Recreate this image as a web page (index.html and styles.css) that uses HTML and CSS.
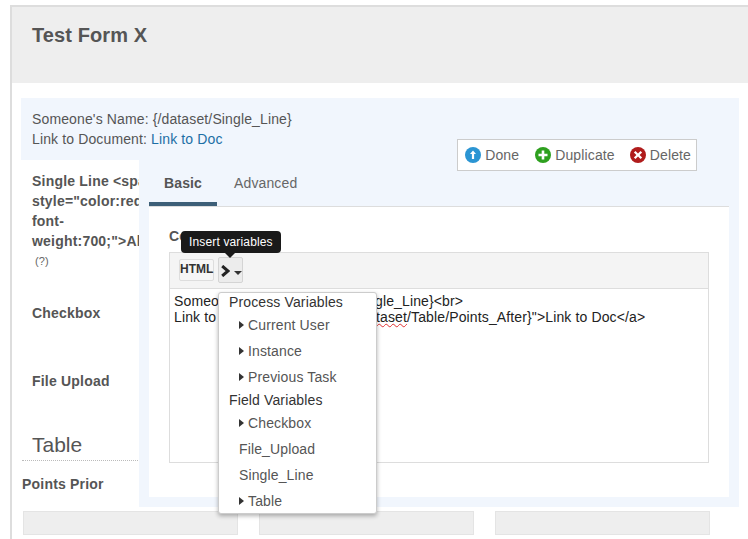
FILE: index.html
```html
<!DOCTYPE html>
<html lang="en">
<head>
<meta charset="utf-8">
<title>Test Form X</title>
<link rel="stylesheet" href="styles.css">
</head>
<body>
<div class="frame">
  <header class="head"><h1>Test Form X</h1></header>
  <main class="main">
    <section class="intro">
      <div>Someone's Name: {/dataset/Single_Line}</div>
      <div>Link to Document: <a href="#">Link to Doc</a></div>
    </section>
    <section class="fields">
      <div class="field-single"><b>Single Line &lt;span style="color:red; font-weight:700;"&gt;All</b><span class="help">(?)</span></div>
      <div class="field-check"><b>Checkbox</b></div>
      <div class="field-file"><b>File Upload</b></div>
      <h2>Table</h2>
      <div class="cols-label"><b>Points Prior</b></div>
      <div class="inputs"><div class="fake"></div><div class="fake"></div><div class="fake"></div></div>
    </section>

    <section class="editor">
      <div class="actions">
        <span class="act"><svg width="16" height="16" viewBox="0 0 16 16"><circle cx="8" cy="8" r="8" fill="#2b95d3"/><path d="M8 3.500 11 7H9.100V12H6.900V7H5Z" fill="#fff"/></svg>Done</span>
        <span class="act"><svg width="16" height="16" viewBox="0 0 16 16"><circle cx="8" cy="8" r="8" fill="#2ea01f"/><path d="M6.700 3.500h2.600v3.200h3.200v2.600H9.300v3.200H6.700V9.300H3.500V6.700H6.700Z" fill="#fff"/></svg>Duplicate</span>
        <span class="act"><svg width="16" height="16" viewBox="0 0 16 16"><circle cx="8" cy="8" r="8" fill="#b01c1c"/><path d="M5.500 3.900 8 6.400 10.500 3.900 12.100 5.500 9.600 8 12.100 10.500 10.500 12.100 8 9.600 5.500 12.100 3.900 10.500 6.400 8 3.900 5.500Z" fill="#fff"/></svg>Delete</span>
      </div>
      <nav class="tabs"><span class="tab on">Basic</span><span class="tab">Advanced</span></nav>
      <div class="pane">
        <div class="content-label">Content</div>
        <div class="wys">
          <div class="bar">
            <span class="btn-html">HTML</span>
            <span class="btn-var"><svg width="9" height="12" viewBox="0 0 9 12"><path d="M1.200 1 7 6 1.200 11" fill="none" stroke="#222" stroke-width="3"/></svg><i class="caret"></i></span>
          </div>
          <div class="code">Someone's Name: {/dataset/Single_Line}&lt;br&gt;<br>Link to Document: &lt;a href="{/<span class="spell">dataset</span>/Table/Points_After}"&gt;Link to Doc&lt;/a&gt;</div>
        </div>
      </div>
      <div class="tip">Insert variables</div>
      <ul class="menu">
        <li class="group">Process Variables</li>
        <li class="item sub">Current User</li>
        <li class="item sub">Instance</li>
        <li class="item sub">Previous Task</li>
        <li class="group">Field Variables</li>
        <li class="item sub">Checkbox</li>
        <li class="item">File_Upload</li>
        <li class="item">Single_Line</li>
        <li class="item sub">Table</li>
      </ul>
    </section>
  </main>
</div>
</body>
</html>
```
FILE: styles.css
```css
html, body { margin: 0; padding: 0; background: #fff; }
body {
  height: 539px;
  overflow: hidden;
  font: 14px/20px "Liberation Sans", Arial, sans-serif;
  letter-spacing: .13px;
  color: #555;
}
.frame {
  margin: 5px 0 0 10px;
  border-left: 2px solid #ddd;
  border-top: 2px solid #ddd;
  height: 532px;
}
.head { height: 76px; background: #eee; box-sizing: border-box; padding: 17px 20px 0; }
.head h1 { margin: 0; font-size: 20px; line-height: 22px; font-weight: 700; color: #555; letter-spacing: .1px; }
.main { position: relative; padding: 15px 9px 0; }
.intro { background: #f1f6fd; height: 62px; padding: 11px 11px 0; box-sizing: border-box; }
.intro a { color: #1d6fa5; text-decoration: none; }
.fields { padding: 11px 0 0 11px; width: 108px; }
.fields b { font-weight: 700; color: #555; letter-spacing: .2px; }
.field-single { height: 132px; width: 130px; }
.help { display: block; font-size: 11px; line-height: 14px; padding-left: 3px; margin-top: 3px; color: #666; }
.field-check { height: 68px; }
.field-file { height: 63px; }
.fields h2 { margin: 0; font-size: 21px; font-weight: 400; line-height: 22px; height: 26px; color: #555; letter-spacing: 0; }
.cols-label { margin-left: -10px; width: 130px; padding-top: 13px; border-top: 1px dotted #bbb; }
.inputs { display: flex; gap: 21px; margin: 17px 0 0 -9px; width: 687px; }
.fake { width: 215px; height: 24px; flex: none; background: #eee; border: 1px solid #e4e4e4; box-sizing: border-box; }

.editor {
  position: absolute;
  left: 127px; top: 77px;
  width: 600px; height: 347px;
  background: #f1f6fd;
  box-sizing: border-box;
  padding: 0 10px;
}
.actions {
  position: absolute; right: 42px; top: -21px;
  display: flex; gap: 15px; align-items: center;
  height: 32px; box-sizing: border-box;
  background: #fff; border: 1px solid #ccc;
  padding: 0 5px 0 7px;
}
.act { display: flex; align-items: center; gap: 4px; color: #666; }
.act:first-child { margin-right: 1px; }
.tabs { display: flex; height: 46px; border-bottom: 1px solid #ddd; }
.tab { padding: 13px 17px 0; color: #666; }
.tab.on { font-weight: 700; color: #555; width: 68px; box-sizing: border-box; padding: 13px 0 0 15px; border-bottom: 4px solid #3d5f78; }
.pane { background: #fff; height: 290px; box-sizing: border-box; padding: 22px 20px 0; }
.content-label { font-weight: 700; line-height: 14px; height: 23px; }
.wys { border: 1px solid #ddd; height: 211px; box-sizing: border-box; }
.bar { background: #f4f4f4; border-bottom: 1px solid #ddd; display: flex; gap: 4px; padding: 6px 0 0 9px; box-sizing: border-box; height: 36px; }
.btn-html { width: 35px; height: 22px; text-align: center; box-sizing: border-box; border: 1px solid #ddd; border-radius: 2px; background: #f6f6f6; font-size: 12px; line-height: 19px; font-weight: 700; color: #333; letter-spacing: 0; }
.btn-var { width: 25px; height: 26px; box-sizing: border-box; border: 1px solid #d4d4d4; border-radius: 2px; background: #ececec; display: flex; align-items: center; gap: 4px; padding: 2px 0 0 2px; margin-top: -2px; }
.caret { width: 0; height: 0; margin-top: 3px; border: 4px solid transparent; border-top-color: #333; border-bottom-width: 0; }
.code { padding: 4px; color: #222; line-height: 16px; white-space: nowrap; }
.spell { text-decoration: underline wavy #e03030 1px; }

.tip {
  position: absolute; left: 42px; top: 71px;
  background: #1a1a1a; color: #fff;
  font-size: 12px; line-height: 22px; height: 22px;
  padding: 0 8px; border-radius: 4px;
  letter-spacing: .15px;
}
.tip::after {
  content: ""; position: absolute; left: 44px; top: 22px;
  border: 5px solid transparent; border-top-color: #1a1a1a; border-bottom-width: 0;
}
.menu {
  position: absolute; left: 79px; top: 132px;
  width: 159px; height: 222px; box-sizing: border-box;
  margin: 0; padding: 0; list-style: none;
  background: #fff; border: 1px solid #ccc; border-radius: 3px;
  box-shadow: 0 2px 4px rgba(0,0,0,.3);
}
.group { height: 20px; line-height: 20px; padding-left: 10px; color: #333; }
.group:first-child { margin-top: -1px; }
.item { height: 26px; line-height: 26px; padding-left: 20px; color: #555; position: relative; }
.item.sub { padding-left: 29px; }
.item.sub::before {
  content: ""; position: absolute; left: 20px; top: 9px;
  border: 4px solid transparent; border-left: 5px solid #333; border-right-width: 0;
}
```
